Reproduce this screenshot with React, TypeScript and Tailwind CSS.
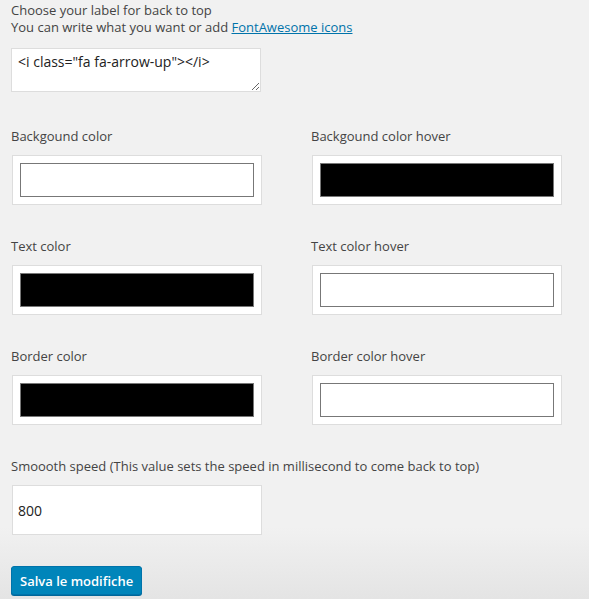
const swatches = [
  [
    { label: "Backgound color", color: "white" },
    { label: "Backgound color hover", color: "black" },
  ],
  [
    { label: "Text color", color: "black" },
    { label: "Text color hover", color: "white" },
  ],
  [
    { label: "Border color", color: "black" },
    { label: "Border color hover", color: "white" },
  ],
];

function ColorField({ label, color }: { label: string; color: string }) {
  return (
    <div className="flex flex-col">
      <div className="h-[18px] leading-[18px]">{label}</div>
      <div className="ml-px mt-[10px] w-[250px] h-[50px] bg-white border border-[#dddddd] p-[7px]">
        <div
          className={
            "w-full h-full border border-[#777777] " +
            (color === "black" ? "bg-black" : "bg-white")
          }
        />
      </div>
    </div>
  );
}

export default function App() {
  return (
    <div
      className="w-[589px] h-[599px] overflow-hidden bg-[linear-gradient(to_bottom,#f1f1f1_0%,#f1f1f1_88%,#e4e4e4_100%)] text-[13px] text-[#444444] pl-[11px] pt-[2px]"
      style={{ fontFamily: '"Open Sans", "Noto Sans", sans-serif' }}
    >
      <div className="leading-[17px]">Choose your label for back to top</div>
      <div className="leading-[17px]">
        You can write what you want or add{" "}
        <a href="#" className="text-[#0073aa] underline">
          FontAwesome icons
        </a>
      </div>

      <textarea
        className="mt-[12px] block w-[250px] h-[44px] bg-white border border-[#dddddd] px-[6px] py-[3px] text-[14px] text-[#222222] leading-[20px] resize-y outline-none"
        style={{ fontFamily: '"Open Sans", "Noto Sans", sans-serif' }}
        defaultValue={'<i class="fa fa-arrow-up"></i>'}
      />

      <div className="mt-[35px] flex flex-col gap-[32px]">
        {swatches.map((row, i) => (
          <div key={i} className="grid grid-cols-[300px_300px]">
            {row.map((s) => (
              <ColorField key={s.label} label={s.label} color={s.color} />
            ))}
          </div>
        ))}

        <div className="flex flex-col">
          <div className="h-[18px] leading-[18px]">
            Smoooth speed (This value sets the speed in millisecond to come back to top)
          </div>
          <input
            className="ml-px mt-[10px] w-[250px] h-[50px] bg-white border border-[#dddddd] px-[5px] text-[14px] text-[#222222] outline-none"
            style={{ fontFamily: '"Open Sans", "Noto Sans", sans-serif' }}
            defaultValue="800"
          />
        </div>
      </div>

      <button className="mt-[31px] h-[29px] px-[8px] rounded-[3px] bg-[#0085ba] border border-[#0073aa] shadow-[0_1px_0_#006799] text-white text-[13px] font-semibold leading-[26px]">
        Salva le modifiche
      </button>
    </div>
  );
}
